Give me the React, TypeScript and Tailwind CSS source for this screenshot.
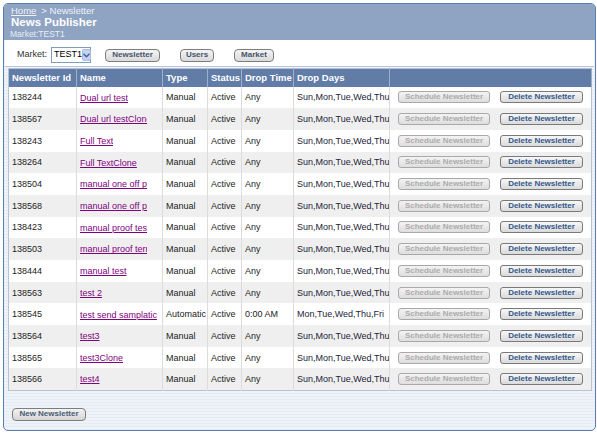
const ROWS = [
  { id: '138244', name: 'Dual url test', type: 'Manual', time: 'Any', days: 'Sun,Mon,Tue,Wed,Thu,Fri,Sat' },
  { id: '138567', name: 'Dual url testClone', type: 'Manual', time: 'Any', days: 'Sun,Mon,Tue,Wed,Thu,Fri,Sat' },
  { id: '138243', name: 'Full Text', type: 'Manual', time: 'Any', days: 'Sun,Mon,Tue,Wed,Thu,Fri,Sat' },
  { id: '138264', name: 'Full TextClone', type: 'Manual', time: 'Any', days: 'Sun,Mon,Tue,Wed,Thu,Fri,Sat' },
  { id: '138504', name: 'manual one off proof', type: 'Manual', time: 'Any', days: 'Sun,Mon,Tue,Wed,Thu,Fri,Sat' },
  { id: '138568', name: 'manual one off proofClone', type: 'Manual', time: 'Any', days: 'Sun,Mon,Tue,Wed,Thu,Fri,Sat' },
  { id: '138423', name: 'manual proof test', type: 'Manual', time: 'Any', days: 'Sun,Mon,Tue,Wed,Thu,Fri,Sat' },
  { id: '138503', name: 'manual proof terms', type: 'Manual', time: 'Any', days: 'Sun,Mon,Tue,Wed,Thu,Fri,Sat' },
  { id: '138444', name: 'manual test', type: 'Manual', time: 'Any', days: 'Sun,Mon,Tue,Wed,Thu,Fri,Sat' },
  { id: '138563', name: 'test 2', type: 'Manual', time: 'Any', days: 'Sun,Mon,Tue,Wed,Thu,Fri,Sat' },
  { id: '138545', name: 'test send samplatic', type: 'Automatic', time: '0:00 AM', days: 'Mon,Tue,Wed,Thu,Fri', wide: true },
  { id: '138564', name: 'test3', type: 'Manual', time: 'Any', days: 'Sun,Mon,Tue,Wed,Thu,Fri,Sat' },
  { id: '138565', name: 'test3Clone', type: 'Manual', time: 'Any', days: 'Sun,Mon,Tue,Wed,Thu,Fri,Sat' },
  { id: '138566', name: 'test4', type: 'Manual', time: 'Any', days: 'Sun,Mon,Tue,Wed,Thu,Fri,Sat' },
]

function TopButton({ label, w }: { label: string; w: string }) {
  return (
    <button
      className={`${w} h-[13px] rounded-[4px] border border-[#7d7d7d] bg-[linear-gradient(#f4f4f4,#d9d9d9)] text-[8px] font-bold leading-none text-[#44556b]`}
    >
      {label}
    </button>
  )
}

export default function App() {
  return (
    <div className="w-[597px] h-[433px] bg-white pt-[3px] pl-[3px] pr-[1px] pb-[2px] font-['Liberation_Sans',Arial,sans-serif]">
      <div className="h-full flex flex-col rounded-[5px] border border-[#5a7cae] overflow-hidden bg-[repeating-linear-gradient(180deg,#eef2f9_0px,#eef2f9_2px,#e5ebf5_2px,#e5ebf5_3px)]">
        {/* header */}
        <div className="shrink-0 h-[36px] bg-[#8fa3c3] pl-[7px] pt-[1px] flex flex-col">
          <div className="text-[9.5px] leading-[11px] text-[#eef2f8]">
            <span className="underline">Home</span>
            <span className="ml-[5px]">&gt; Newsletter</span>
          </div>
          <div className="text-[11.5px] leading-[13px] font-bold text-white">News Publisher</div>
          <div className="-ml-[1px] text-[8.5px] leading-[10px] text-[#e8edf5]">Market:TEST1</div>
        </div>

        {/* market bar */}
        <div className="shrink-0 h-[27px] mx-[1px] pt-[4px] bg-white border-b border-[#b9c6da] flex items-center">
          <span className="ml-[12px] text-[9px] text-[#333]">Market:</span>
          <div className="ml-[4px] w-[40px] h-[16px] border border-[#7f9db9] bg-white flex items-center justify-between">
            <span className="pl-[2px] text-[9px] text-black">TEST1</span>
            <span className="mr-[1px] w-[12px] h-[12px] rounded-[2px] bg-[#c1d2f5] border border-[#a8bce6] flex items-center justify-center">
              <svg width="7" height="5" viewBox="0 0 7 5">
                <path d="M0.5 0.8 L3.5 3.8 L6.5 0.8" fill="none" stroke="#4d6185" strokeWidth="1.4" />
              </svg>
            </span>
          </div>
          <div className="ml-[14px] flex items-center gap-[20px]">
            <TopButton label="Newsletter" w="w-[55px]" />
            <TopButton label="Users" w="w-[34px]" />
            <TopButton label="Market" w="w-[40px]" />
          </div>
        </div>

        {/* table */}
        <div className="shrink-0 px-[4px] pt-[1px]">
          <table className="w-[583px] table-fixed border-collapse border border-[#b8c2d0] bg-white">
            <colgroup>
              <col className="w-[68px]" />
              <col className="w-[86px]" />
              <col className="w-[45px]" />
              <col className="w-[34px]" />
              <col className="w-[52px]" />
              <col className="w-[96px]" />
              <col className="w-[202px]" />
            </colgroup>
            <thead>
              <tr className="h-[18px] bg-[#607ca7] text-white text-[9.5px] leading-[12px] font-bold text-left">
                {['Newsletter Id', 'Name', 'Type', 'Status', 'Drop Time', 'Drop Days', ''].map((h, i) => (
                  <th
                    key={i}
                    className="pl-[3px] whitespace-nowrap overflow-hidden border-r border-[#9fb0ca] font-bold"
                  >
                    {h}
                  </th>
                ))}
              </tr>
            </thead>
            <tbody>
              {ROWS.map((r, i) => (
                <tr
                  key={r.id}
                  className={`h-[21.7px] text-[9px] leading-[12px] text-[#222] ${i % 2 === 1 ? 'bg-[#efefef]' : 'bg-white'}`}
                >
                  <td className="pl-[3px] border-r border-[#dcdcdc]">{r.id}</td>
                  <td className="pl-[3px] border-r border-[#dcdcdc] whitespace-nowrap overflow-hidden">
                    <span
                      className={`inline-block align-middle overflow-hidden whitespace-nowrap underline text-[#800080] ${r.wide ? 'max-w-[79px]' : 'max-w-[67px]'}`}
                    >
                      {r.name}
                    </span>
                  </td>
                  <td className="pl-[3px] border-r border-[#dcdcdc] whitespace-nowrap overflow-hidden">{r.type}</td>
                  <td className="pl-[3px] border-r border-[#dcdcdc]">Active</td>
                  <td className="pl-[3px] border-r border-[#dcdcdc] whitespace-nowrap">{r.time}</td>
                  <td className="pl-[3px] border-r border-[#dcdcdc] whitespace-nowrap overflow-hidden text-[#1d1d3a]">{r.days}</td>
                  <td className="pl-[8px]">
                    <div className="flex items-center gap-[10px]">
                      <button className="w-[92px] h-[12px] rounded-[3px] border border-[#a9a9a9] bg-[linear-gradient(#f3f3f3,#dedede)] text-[8px] font-bold leading-none text-[#ababab]">
                        Schedule Newsletter
                      </button>
                      <button className="w-[83px] h-[12px] rounded-[3px] border border-[#7a7a7a] bg-[linear-gradient(#f7f7f7,#dadada)] text-[8px] font-bold leading-none text-[#34588a]">
                        Delete Newsletter
                      </button>
                    </div>
                  </td>
                </tr>
              ))}
            </tbody>
          </table>
        </div>

        {/* footer */}
        <div className="shrink-0 flex pl-[8px] pt-[17px]">
          <button className="w-[74px] h-[13px] rounded-[4px] border border-[#7d7d7d] bg-[linear-gradient(#f2f2f2,#d6d6d6)] text-[8px] font-bold leading-none text-[#4a5d78]">
            New Newsletter
          </button>
        </div>
      </div>
    </div>
  )
}
